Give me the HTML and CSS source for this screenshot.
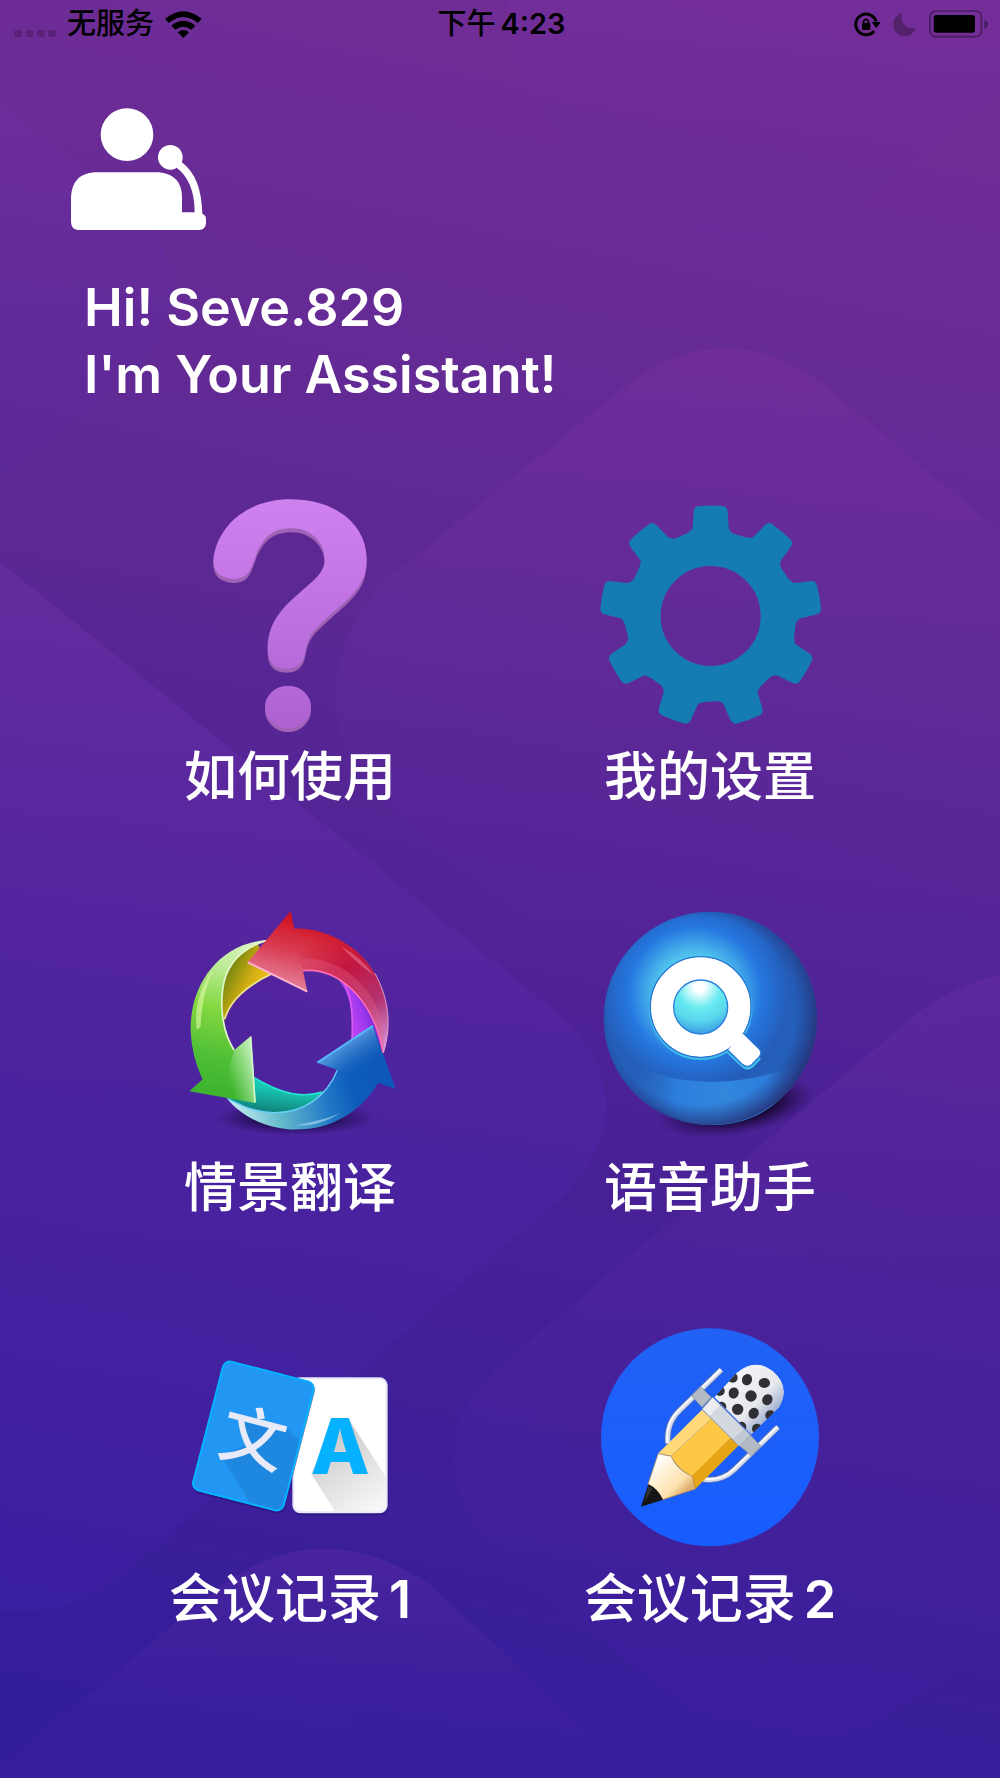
FILE: index.html
```html
<!DOCTYPE html>
<html lang="zh-CN">
  <head>
    <meta charset="UTF-8" />
    <meta name="viewport" content="width=device-width, initial-scale=1" />
    <title>会议助手</title>
    <link rel="stylesheet" href="styles.css">
  </head>
  <body>
    <!-- 背景 -->
    <svg class="backdrop" viewBox="0 0 1000 1778" preserveAspectRatio="xMidYMid slice" aria-hidden="true">
      <defs>
        <linearGradient id="bgBase" gradientUnits="userSpaceOnUse" x1="680" y1="0" x2="320" y2="1778">
          <stop offset="0" stop-color="#722d96" />
          <stop offset="0.35" stop-color="#5c2894" />
          <stop offset="0.6" stop-color="#4b2196" />
          <stop offset="1" stop-color="#331d9b" />
        </linearGradient>
        <linearGradient id="bgShape" x1="0" y1="0" x2="0" y2="1">
          <stop offset="0" stop-color="#8a3cc0" stop-opacity="0.22" />
          <stop offset="0.5" stop-color="#5a2cc0" stop-opacity="0.2" />
          <stop offset="1" stop-color="#4a24c0" stop-opacity="0.14" />
        </linearGradient>
        <linearGradient id="bgSide" x1="0" y1="0" x2="0" y2="1">
          <stop offset="0" stop-color="#8038b0" stop-opacity="0.22" />
          <stop offset="0.6" stop-color="#5a28a8" stop-opacity="0.14" />
          <stop offset="1" stop-color="#4a22a8" stop-opacity="0.1" />
        </linearGradient>
        <linearGradient id="bgFade" x1="0" y1="0" x2="0" y2="1">
          <stop offset="0" stop-color="#8a36a8" stop-opacity="0.24" />
          <stop offset="1" stop-color="#5a2cb8" stop-opacity="0.02" />
        </linearGradient>
      </defs>
      <rect width="1000" height="1778" fill="url(#bgBase)" />
      <path fill="url(#bgShape)" opacity="0.6" d="M0 103 L130 205 Q215 285 130 380 L0 477Z" />
      <path fill="url(#bgShape)" opacity="0.3" d="M508 0 Q512 100 590 160 L670 218 Q770 275 860 205 L1000 90 V0Z" />
      <path fill="url(#bgFade)" d="M630 383 Q728 312 825 386 L1000 532 V1000 L800 1090 Q740 1100 690 1060 L380 800 Q290 700 380 585Z" />
      <path fill="url(#bgShape)" d="M0 562 L560 1015 Q650 1100 565 1195 L115 1580 Q60 1620 0 1611Z" />
      <path fill="url(#bgSide)" d="M1000 975 Q955 985 915 1015 L495 1370 Q415 1450 490 1550 L690 1710 Q780 1775 880 1720 L1000 1640Z" />
      <path fill="url(#bgSide)" d="M0 1768 L215 1590 Q320 1510 430 1585 L640 1778 H0Z" />
    </svg>

    <!-- 状态栏 -->
    <div class="status-bar">
      <div class="status-left">
        <svg class="signal" viewBox="42 30 126 81" aria-hidden="true">
          <rect x="43" y="87" width="23" height="21" rx="6" />
          <rect x="77" y="87" width="23" height="21" rx="6" />
          <rect x="111" y="87" width="23" height="21" rx="6" />
          <rect x="145" y="87" width="23" height="21" rx="6" />
        </svg>
        <span class="carrier">无服务</span>
        <svg class="wifi" viewBox="494 30 111 81" aria-hidden="true">
          <path d="M494 53 Q549 8 604 53 L593 66 Q549 30 505 66Z" />
          <path d="M513 74 Q549 45 585 74 L573 86 Q549 68 525 86Z" />
          <path d="M532 94 Q549 80 566 94 L549 111Z" />
        </svg>
      </div>
      <time class="clock">下午<span class="clock-digits">4:23</span></time>
      <div class="status-right">
        <svg class="lock" viewBox="39 30 81 78" aria-hidden="true">
          <path d="M99 90 A31 31 0 1 1 105 62" fill="none" stroke="#000" stroke-width="9" />
          <path d="M92 63 H119 L106 82Z" />
          <path d="M68 68 V60 Q75 50 82 60 V68" fill="none" stroke="#000" stroke-width="5" />
          <rect x="63" y="66" width="25" height="21" rx="3" />
        </svg>
        <svg class="moon" viewBox="162 33 72 72" aria-hidden="true">
          <path d="M190 36 A35 35 0 1 0 231 80 A33 33 0 0 1 190 36Z" />
        </svg>
        <svg class="battery" viewBox="267 28 180 84" aria-hidden="true">
          <rect x="270" y="31" width="154" height="77" rx="17" fill="none" stroke="#481c60" stroke-width="5" />
          <rect x="281" y="43" width="124" height="53" rx="8" />
          <path d="M433 57 Q444 62 444 70 Q444 79 433 84Z" fill="#481c60" />
        </svg>
      </div>
    </div>

    <header class="header">
      <svg class="avatar" viewBox="213 324 405 366" aria-hidden="true">
        <circle cx="381" cy="404" r="79" />
        <circle cx="511" cy="472" r="37" />
        <path d="M283 517 H478 Q546 525 546 592 V637 H584 C584 575 566 530 528 502 L544 485 C588 518 605 570 607 641 Q618 646 618 656 V670 Q616 690 598 690 H235 Q213 688 213 665 V592 Q216 522 283 517Z" />
      </svg>
      <h1 class="greeting">Hi! Seve.829<br />I'm Your Assistant!</h1>
    </header>

    <main class="menu">
      <button class="tile" type="button">
        <svg class="tile-icon" viewBox="-30 45 720 720" aria-hidden="true">
          <defs>
            <linearGradient id="helpFill" gradientUnits="userSpaceOnUse" x1="0" y1="58" x2="0" y2="750">
              <stop offset="0" stop-color="#cf81ef" />
              <stop offset="1" stop-color="#ae62d2" />
            </linearGradient>
            <path id="helpHook" d="M100 240 C110 140 200 58 330 58 C465 58 560 132 560 238 C560 320 505 355 440 415 C400 450 384 468 376 515 Q368 566 318 566 Q263 566 263 505 C263 440 295 392 355 342 C400 302 434 280 434 238 C434 185 390 145 335 145 C280 145 250 170 228 225 C212 270 205 297 160 297 Q100 293 100 240Z" />
          </defs>
          <g fill="#9f62b4">
            <use href="#helpHook" y="12" />
            <circle cx="324" cy="688" r="69" />
          </g>
          <g fill="url(#helpFill)">
            <use href="#helpHook" />
            <ellipse cx="324" cy="681" rx="69" ry="64" />
          </g>
        </svg>
        <span class="tile-label">如何使用</span>
      </button>

      <button class="tile" type="button">
        <svg class="tile-icon" viewBox="30 45 720 720" aria-hidden="true">
          <defs>
            <path id="tooth" d="M-60 -200 L-70 -246 Q-56 -252 -54 -266 L-51 -313 Q-49 -330 -34 -330 Q0 -333 34 -330 Q49 -330 51 -313 L54 -266 Q56 -252 70 -246 L105 -236 Q114 -233 120 -237 L110 -190Z" />
          </defs>
          <g transform="translate(392 408)" fill="#157cb2">
            <circle r="199" fill="none" stroke="#157cb2" stroke-width="98" />
            <use href="#tooth" />
            <use href="#tooth" transform="rotate(40)" />
            <use href="#tooth" transform="rotate(80)" />
            <use href="#tooth" transform="rotate(120)" />
            <use href="#tooth" transform="rotate(160)" />
            <use href="#tooth" transform="rotate(200)" />
            <use href="#tooth" transform="rotate(240)" />
            <use href="#tooth" transform="rotate(280)" />
            <use href="#tooth" transform="rotate(320)" />
          </g>
        </svg>
        <span class="tile-label">我的设置</span>
      </button>

      <button class="tile" type="button">
        <svg class="tile-icon" viewBox="0 48 720 720" aria-hidden="true">
          <defs>
            <radialGradient id="arrowShadow">
              <stop offset="0" stop-color="#000" stop-opacity="0.9" />
              <stop offset="0.5" stop-color="#0c0428" stop-opacity="0.6" />
              <stop offset="1" stop-color="#1c0a50" stop-opacity="0" />
            </radialGradient>
            <linearGradient id="yellowFill" gradientUnits="userSpaceOnUse" x1="165" y1="270" x2="265" y2="320">
              <stop offset="0" stop-color="#7d8a10" />
              <stop offset="0.6" stop-color="#d3ae12" />
              <stop offset="1" stop-color="#f2c01a" />
            </linearGradient>
            <linearGradient id="purpleFill" gradientUnits="userSpaceOnUse" x1="545" y1="380" x2="635" y2="350">
              <stop offset="0" stop-color="#b842f2" />
              <stop offset="0.4" stop-color="#9a35ee" />
              <stop offset="1" stop-color="#5a1a98" />
            </linearGradient>
            <linearGradient id="tealFill" gradientUnits="userSpaceOnUse" x1="320" y1="595" x2="310" y2="670">
              <stop offset="0" stop-color="#18c6b4" />
              <stop offset="1" stop-color="#108078" />
            </linearGradient>
            <linearGradient id="greenFill" gradientUnits="userSpaceOnUse" x1="270" y1="150" x2="150" y2="600">
              <stop offset="0" stop-color="#e0f5c8" />
              <stop offset="0.22" stop-color="#bdec98" />
              <stop offset="0.5" stop-color="#84d840" />
              <stop offset="0.8" stop-color="#4fbf36" />
              <stop offset="1" stop-color="#3fb52f" />
            </linearGradient>
            <linearGradient id="greenEdge" gradientUnits="userSpaceOnUse" x1="175" y1="560" x2="260" y2="535">
              <stop offset="0" stop-color="#b8f0b0" stop-opacity="0" />
              <stop offset="1" stop-color="#c8f0c4" stop-opacity="0.9" />
            </linearGradient>
            <linearGradient id="redFill" gradientUnits="userSpaceOnUse" x1="400" y1="90" x2="350" y2="290">
              <stop offset="0" stop-color="#d01222" />
              <stop offset="0.5" stop-color="#d93f55" />
              <stop offset="1" stop-color="#e6809a" />
            </linearGradient>
            <linearGradient id="redTail" gradientUnits="userSpaceOnUse" x1="440" y1="150" x2="650" y2="480">
              <stop offset="0" stop-color="#c8102e" stop-opacity="0" />
              <stop offset="0.3" stop-color="#c31540" />
              <stop offset="0.65" stop-color="#b23572" />
              <stop offset="1" stop-color="#d79be6" />
            </linearGradient>
            <linearGradient id="blueFill" gradientUnits="userSpaceOnUse" x1="180" y1="640" x2="620" y2="520">
              <stop offset="0" stop-color="#c4eff0" />
              <stop offset="0.3" stop-color="#62b8cc" />
              <stop offset="0.6" stop-color="#257cc8" />
              <stop offset="0.8" stop-color="#0c5cba" />
              <stop offset="1" stop-color="#0d58b8" />
            </linearGradient>
            <linearGradient id="blueHead" gradientUnits="userSpaceOnUse" x1="510" y1="465" x2="560" y2="545">
              <stop offset="0" stop-color="#6aa8e8" stop-opacity="0.8" />
              <stop offset="1" stop-color="#2f74c8" stop-opacity="0" />
            </linearGradient>
          </defs>
          <ellipse cx="375" cy="685" rx="245" ry="52" fill="url(#arrowShadow)" />
          <path fill="url(#yellowFill)" d="M162 395 C140 290 180 190 262 158 L305 250 C235 285 178 330 162 395Z" />
          <path d="M164 388 C180 330 235 285 303 253" fill="none" stroke="#f0e88a" stroke-width="5" />
          <path fill="url(#purpleFill)" d="M480 244 C570 250 625 330 640 450 L638 480 L545 460 C548 380 550 300 480 244Z" />
          <path d="M495 248 C546 290 550 360 546 455" fill="none" stroke="#dc56f0" stroke-width="5" />
          <path fill="url(#tealFill)" d="M175 625 L250 560 C330 610 400 628 470 600 L440 660 C380 685 250 680 175 625Z" />
          <path d="M253 563 C330 610 400 625 455 606" fill="none" stroke="#25e6d2" stroke-width="5" />
          <path fill="url(#blueFill)" d="M170 624 C230 700 330 722 390 718 C480 716 570 670 625 578 L677 597 L608 405 L442 518 L503 540 C470 620 400 672 310 669 C250 666 210 645 170 624Z" />
          <path fill="url(#blueHead)" d="M608 405 L442 518 L503 540 L560 560 L630 480Z" />
          <path d="M442 518 L608 408" fill="none" stroke="#55b8fa" stroke-width="6" />
          <path d="M502 541 C470 620 400 670 310 668 C250 666 210 645 173 626" fill="none" stroke="#6ad0fa" stroke-width="4" />
          <path d="M375 706 C430 708 470 695 512 668 C480 684 430 696 375 706Z" fill="#b6dcf8" opacity="0.6" />
          <path fill="url(#greenFill)" d="M290 150 C150 160 60 280 62 420 C64 480 80 530 98 568 L58 604 L257 639 L243 438 L193 480 C160 430 150 360 158 300 C165 235 200 180 290 150Z" />
          <path fill="url(#greenEdge)" d="M243 438 L193 480 L150 620 L257 639Z" />
          <path d="M192 480 C160 430 150 360 158 300 C165 235 200 180 288 152" fill="none" stroke="#e2f8ca" stroke-width="5" />
          <path d="M242 440 L255 637" fill="none" stroke="#d4f6cc" stroke-width="5" />
          <path d="M80 420 C72 345 92 290 132 235 C104 300 94 350 92 410Z" fill="#dff9a8" opacity="0.6" />
          <path fill="url(#redFill)" d="M362 63 L233 217 L412 305 L399 242 C500 232 610 320 640 490 C670 400 650 290 590 215 C530 145 440 112 373 116Z" />
          <path fill="url(#redTail)" d="M373 116 L399 242 C500 232 610 320 640 490 C670 400 650 290 590 215 C530 145 440 112 373 116Z" />
          <path fill="#e66088" opacity="0.35" d="M395 205 C490 205 560 250 610 330 C640 380 645 430 640 490 C620 340 530 232 399 242Z" />
          <path d="M233 217 L412 305" fill="none" stroke="#ffb2cc" stroke-width="6" />
          <path d="M399 242 C500 232 610 320 639 488" fill="none" stroke="#ff6cb4" stroke-width="5" />
          <path d="M640 488 C665 410 658 330 615 250" fill="none" stroke="#e69ac8" stroke-width="3" />
          <path d="M515 170 C560 195 590 225 610 255 C585 235 550 210 515 170Z" fill="#ff9cab" opacity="0.4" />
        </svg>
        <span class="tile-label">情景翻译</span>
      </button>

      <button class="tile" type="button">
        <svg class="tile-icon" viewBox="30 48 720 720" aria-hidden="true">
          <defs>
            <radialGradient id="ballFill" gradientUnits="userSpaceOnUse" cx="345" cy="310" r="400">
              <stop offset="0" stop-color="#62e4f2" />
              <stop offset="0.28" stop-color="#52c6ee" />
              <stop offset="0.5" stop-color="#2577e0" />
              <stop offset="0.7" stop-color="#245db8" />
              <stop offset="1" stop-color="#2468c4" />
            </radialGradient>
            <radialGradient id="ballEdge" gradientUnits="userSpaceOnUse" cx="362" cy="362" r="360">
              <stop offset="0.78" stop-color="#24307a" stop-opacity="0" />
              <stop offset="1" stop-color="#262868" stop-opacity="0.85" />
            </radialGradient>
            <radialGradient id="ballLow" gradientUnits="userSpaceOnUse" cx="430" cy="620" r="280">
              <stop offset="0" stop-color="#3288dc" />
              <stop offset="0.5" stop-color="#2d82e0" stop-opacity="0.9" />
              <stop offset="1" stop-color="#2a6cc0" stop-opacity="0" />
            </radialGradient>
            <radialGradient id="ballLens" gradientUnits="userSpaceOnUse" cx="358" cy="290" r="145">
              <stop offset="0.1" stop-color="#fff" />
              <stop offset="0.45" stop-color="#66eaf0" />
              <stop offset="0.7" stop-color="#5ad8ee" />
              <stop offset="1" stop-color="#3a98e0" />
            </radialGradient>
            <radialGradient id="ballShadow">
              <stop offset="0" stop-color="#000" />
              <stop offset="0.45" stop-color="#080214" stop-opacity="0.85" />
              <stop offset="1" stop-color="#200a50" stop-opacity="0" />
            </radialGradient>
          </defs>
          <ellipse cx="470" cy="650" rx="240" ry="86" fill="url(#ballShadow)" transform="rotate(-10 470 650)" />
          <circle cx="391" cy="385" r="320" fill="url(#ballFill)" />
          <path fill="url(#ballLow)" d="M125 510 Q250 575 391 575 Q540 575 680 515 Q590 705 391 705 Q210 700 125 510Z" />
          <circle cx="391" cy="385" r="320" fill="url(#ballEdge)" />
          <g fill="none" stroke="#43bdea" stroke-width="8">
            <circle cx="362" cy="355" r="151" />
            <path d="M442 485 L488 529 Q502 541 517 529 L540 504" />
          </g>
          <circle cx="362" cy="351" r="151" fill="#fff" stroke="#2674d4" stroke-width="4" />
          <path fill="#fff" stroke="#2674d4" stroke-width="4" d="M490 430 L538 477 Q548 488 538 500 L515 524 Q502 534 488 524 L443 480" />
          <circle cx="362" cy="351" r="148" fill="#fff" />
          <circle cx="362" cy="351" r="81" fill="url(#ballLens)" stroke="#2b80dc" stroke-width="4" />
        </svg>
        <span class="tile-label">语音助手</span>
      </button>

      <button class="tile" type="button">
        <svg class="tile-icon" viewBox="60 -9 720 720" aria-hidden="true">
          <defs>
            <linearGradient id="paperShade" gradientUnits="userSpaceOnUse" x1="530" y1="380" x2="660" y2="570">
              <stop offset="0" stop-color="#cfcfcf" />
              <stop offset="1" stop-color="#f6f6f6" />
            </linearGradient>
            <clipPath id="blueCard">
              <rect x="-138" y="-197" width="276" height="394" rx="20" />
            </clipPath>
          </defs>
          <rect x="429" y="178" width="286" height="408" rx="24" fill="#24106a" opacity="0.5" />
          <rect x="427" y="172" width="286" height="408" rx="24" fill="#e6e6fa" />
          <rect x="433" y="178" width="274" height="396" rx="18" fill="#fff" />
          <path fill="url(#paperShade)" d="M484 461 L555 574 H690 Q707 572 707 556 V470 L594 294 L540 330Z" />
          <path fill="#ccc" d="M497 205 L433 450 L427 465 V390 L480 190Z" />
          <text class="glyph-a" x="571" y="461" text-anchor="middle">A</text>
          <g transform="translate(310 348) rotate(14.5)">
            <rect x="-140" y="-194" width="285" height="402" rx="24" fill="#24106a" opacity="0.45" />
            <rect x="-143" y="-202" width="286" height="404" rx="24" fill="#06b2ff" />
            <rect x="-138" y="-197" width="276" height="394" rx="20" fill="#2196f3" />
            <g clip-path="url(#blueCard)">
              <path fill="#1e88e0" d="M-78 82 L44 200 H140 V-20 L88 -50 L-75 -55 L0 20Z" />
            </g>
            <rect x="-140" y="-199" width="280" height="398" rx="22" fill="none" stroke="#06b2ff" stroke-width="5" />
            <text class="glyph-wen" x="2" y="78" text-anchor="middle">文</text>
          </g>
        </svg>
        <span class="tile-label">会议记录<span class="tile-number">1</span></span>
      </button>

      <button class="tile" type="button">
        <svg class="tile-icon" viewBox="60 21 720 720" aria-hidden="true">
          <defs>
            <linearGradient id="discFill" x1="0" y1="0" x2="0" y2="1">
              <stop offset="0" stop-color="#2162f4" />
              <stop offset="1" stop-color="#175cff" />
            </linearGradient>
            <linearGradient id="micFill" gradientUnits="userSpaceOnUse" x1="480" y1="210" x2="610" y2="330">
              <stop offset="0" stop-color="#f2f3f4" />
              <stop offset="0.6" stop-color="#e6e8ec" />
              <stop offset="1" stop-color="#93a4cc" />
            </linearGradient>
            <linearGradient id="woodFill" gradientUnits="userSpaceOnUse" x1="240" y1="470" x2="330" y2="560">
              <stop offset="0" stop-color="#fff" />
              <stop offset="0.35" stop-color="#fff0d4" />
              <stop offset="0.75" stop-color="#ffe2b0" />
              <stop offset="1" stop-color="#dcb070" />
            </linearGradient>
            <clipPath id="micHead">
              <path d="M433 262 L500 188 Q555 142 608 182 Q664 230 628 292 L544 374Z" />
            </clipPath>
          </defs>
          <circle cx="420" cy="382" r="327" fill="url(#discFill)" />
          <g fill="none">
            <g stroke="#5470b8" stroke-width="19">
              <path d="M454 179 L326 304 Q288 342 294 400" />
              <path d="M624 351 L494 478 Q455 516 400 508" />
            </g>
            <g stroke="#d4dbea" stroke-width="14">
              <path d="M454 179 L326 304 Q288 342 294 400" />
              <path d="M624 351 L494 478 Q455 516 400 508" />
            </g>
            <g stroke="#fff" stroke-width="5">
              <path d="M452 178 L324 303 Q286 341 292 400" />
              <path d="M622 350 L492 477 Q453 514 400 506" />
            </g>
          </g>
          <g clip-path="url(#micHead)">
            <path fill="url(#micFill)" d="M433 262 L500 188 Q555 142 608 182 Q664 230 628 292 L544 374Z" />
            <g fill="#2e3034">
              <ellipse cx="531" cy="209" rx="15" ry="17" transform="rotate(20 531 209)" />
              <ellipse cx="583" cy="219" rx="17" ry="15" />
              <ellipse cx="491" cy="249" rx="15" ry="17" transform="rotate(20 491 249)" />
              <circle cx="543" cy="258" r="17" />
              <ellipse cx="592" cy="269" rx="15" ry="17" transform="rotate(30 592 269)" />
              <circle cx="503" cy="298" r="17" />
              <ellipse cx="551" cy="310" rx="15" ry="17" transform="rotate(30 551 310)" />
              <circle cx="488" cy="203" r="15" />
              <circle cx="449" cy="243" r="15" />
              <circle cx="454" cy="290" r="15" />
              <circle cx="514" cy="350" r="15" />
              <circle cx="561" cy="356" r="15" />
              <circle cx="601" cy="316" r="15" />
            </g>
          </g>
          <path fill="#b2bac4" stroke="#7e8894" stroke-width="2" d="M392 230 L424 262 L396 292 L365 258Z" />
          <path fill="#b2bac4" stroke="#7e8894" stroke-width="2" d="M542 376 L572 408 L545 438 L507 406Z" />
          <path fill="#d3d8de" stroke="#8c95a2" stroke-width="2" d="M428 262 L542 376 L507 408 L396 297Z" />
          <path fill="#ebedf0" d="M428 263 L450 285 L419 318 L398 297Z" />
          <path fill="#c0c8d2" d="M522 357 L541 376 L507 407 L488 388Z" />
          <path fill="#ffd97a" d="M396 299 L424 326 L303 438 L265 430Z" />
          <path fill="#ffc844" d="M424 326 L482 384 L368 499 Q325 482 303 438Z" />
          <path fill="#e6a514" d="M482 384 L505 407 L375 538 L366 497Z" />
          <path fill="url(#woodFill)" stroke="#b08038" stroke-width="2" d="M265 430 Q285 437 303 438 Q320 480 368 499 L376 537 L278 569 Q262 535 234 523Z" />
          <path fill="#151515" d="M235 523 Q262 535 279 569 L213 590Z" />
          <path fill="#444" d="M235 528 L248 535 L222 580Z" opacity="0.6" />
        </svg>
        <span class="tile-label">会议记录<span class="tile-number">2</span></span>
      </button>
    </main>
  </body>
</html>
```
FILE: styles.css
```css
* {
  box-sizing: border-box;
  margin: 0;
  padding: 0;
}

body {
  position: relative;
  min-height: 100vh;
  background-color: #4b2196;
  color: #fff;
  font-family: Inter, "Noto Sans CJK SC", sans-serif;
}

.backdrop {
  position: absolute;
  inset: 0;
  z-index: -1;
  width: 100%;
  height: 100%;
}

.status-bar {
  display: grid;
  grid-template-columns: 1fr auto 1fr;
  align-items: center;
  height: 48px;
  padding: 0 11px 0 14px;
  color: #000;
  font-size: 29px;
  font-weight: 500;
  line-height: 48px;
}

.status-left,
.status-right {
  display: flex;
  align-items: center;
}

.status-left {
  gap: 11px;
}

.status-right {
  justify-content: flex-end;
  gap: 12px;
}

.clock-digits {
  margin-left: 5px;
  font-weight: 600;
}

.signal {
  width: 42px;
  height: 27px;
  fill: #572277;
}

.wifi {
  width: 37px;
  height: 27px;
}

.lock {
  width: 27px;
  height: 26px;
}

.moon {
  width: 24px;
  height: 24px;
  fill: #54226c;
}

.battery {
  width: 60px;
  height: 28px;
}

.header {
  padding: 60px 71px 0;
}

.avatar {
  display: block;
  width: 135px;
  height: 122px;
  fill: #fff;
}

.greeting {
  margin-top: 44px;
  padding-left: 13px;
  font-size: 52px;
  font-weight: 600;
  line-height: 67px;
}

.menu {
  display: grid;
  grid-template-columns: 1fr 1fr;
  row-gap: 87px;
  padding: 87px 80px;
}

.tile {
  display: flex;
  flex-direction: column;
  align-items: center;
  border: none;
  background: none;
  color: inherit;
  font: inherit;
  cursor: pointer;
}

.tile-icon {
  width: 240px;
  height: 240px;
}

.tile-label {
  font-size: 53px;
  font-weight: 500;
  line-height: 84px;
  white-space: nowrap;
}

.tile-number {
  margin-left: 8px;
  font-size: 52px;
  font-weight: 600;
}

.glyph-a {
  fill: #06b2ff;
  font-size: 230px;
  font-weight: 800;
}

.glyph-wen {
  fill: #e8eaf8;
  font-size: 196px;
  font-weight: 500;
}
```
